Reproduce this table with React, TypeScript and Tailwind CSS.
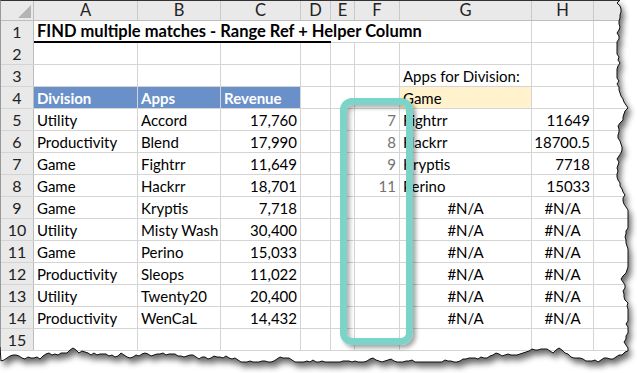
import React from 'react';

type Cell = { t?: string; align?: 'l' | 'r' | 'c'; cls?: string };

const WIDTHS = ['w-[104px]', 'w-[83px]', 'w-[80px]', 'w-[30px]', 'w-[24px]', 'w-[45px]', 'w-[132px]', 'w-[62px]', 'w-[80px]'];
const LETTERS = ['A', 'B', 'C', 'D', 'E', 'F', 'G', 'H', ''];

const data: [string, string, string][] = [
  ['Utility', 'Accord', '17,760'],
  ['Productivity', 'Blend', '17,990'],
  ['Game', 'Fightrr', '11,649'],
  ['Game', 'Hackrr', '18,701'],
  ['Game', 'Kryptis', '7,718'],
  ['Utility', 'Misty Wash', '30,400'],
  ['Game', 'Perino', '15,033'],
  ['Productivity', 'Sleops', '11,022'],
  ['Utility', 'Twenty20', '20,400'],
  ['Productivity', 'WenCaL', '14,432'],
];

const helper = ['7', '8', '9', '11'];
const found: [string, string][] = [
  ['Fightrr', '11649'],
  ['Hackrr', '18700.5'],
  ['Kryptis', '7718'],
  ['Perino', '15033'],
];

// seeded random for the torn paper edge
function rng(seed: number) {
  return () => {
    seed |= 0;
    seed = (seed + 0x6d2b79f5) | 0;
    let t = Math.imul(seed ^ (seed >>> 15), 1 | seed);
    t = (t + Math.imul(t ^ (t >>> 7), 61 | t)) ^ t;
    return ((t ^ (t >>> 14)) >>> 0) / 4294967296;
  };
}

function tornEdge() {
  const r = rng(7);
  const pts: [number, number][] = [[0, 0]];
  let x = 622;
  for (let y = 0; y <= 348; y += 3) {
    x += (r() - 0.5) * 5;
    x = Math.max(617, Math.min(628, x));
    pts.push([Math.round(x), y]);
  }
  let y = 350;
  for (let xx = x; xx >= 0; xx -= 3) {
    y += (r() - 0.48) * 5;
    if (xx < 60 && xx > 25) y += 0.6;
    y = Math.max(344, Math.min(362, y));
    pts.push([Math.round(xx), Math.round(y)]);
  }
  pts.push([0, 347]);
  return pts;
}

const GridCell = ({ w, c }: { w: string; c: Cell }) => {
  const align = c.align === 'r' ? 'justify-end' : c.align === 'c' ? 'justify-center' : 'justify-start';
  return (
    <div className={`${w} h-full shrink-0 flex items-end pb-[1px] leading-[18px] px-[3px] border-r border-[#d4d4d4] whitespace-nowrap ${align} ${c.cls ?? ''}`}>
      {c.t}
    </div>
  );
};

const RowHead = ({ n }: { n: number }) => (
  <div className="w-[33px] h-full shrink-0 flex items-center justify-center bg-[#e9e9e9] border-r border-[#bdbdbd] text-[16px] text-[#222]">
    {n}
  </div>
);

const Row = ({ n, cells }: { n: number; cells: Cell[] }) => (
  <div className="flex h-[22px] border-b border-[#d4d4d4]">
    <RowHead n={n} />
    {WIDTHS.map((w, i) => (
      <GridCell key={i} w={w} c={cells[i] ?? {}} />
    ))}
  </div>
);

export default function App() {
  const pts = tornEdge();
  const clip = `polygon(${pts.map(([x, y]) => `${x}px ${y}px`).join(',')})`;
  const shadowPts = pts.map(([x, y]) => `${x + 3},${y + 5}`).join(' ');
  const edgePts = pts.slice(1).map(([x, y]) => `${x},${y}`).join(' ');

  const rows: Cell[][] = data.map((d, i) => {
    const r: Cell[] = [{ t: d[0] }, { t: d[1] }, { t: d[2], align: 'r' }, {}, {}];
    r.push(i < 4 ? { t: helper[i], align: 'r', cls: 'text-[#767171]' } : {});
    if (i < 4) {
      r.push({ t: found[i][0] });
      r.push({ t: found[i][1], align: 'r' });
    } else {
      r.push({ t: '#N/A', align: 'c' });
      r.push({ t: '#N/A', align: 'c' });
    }
    return r;
  });

  return (
    <div className="relative w-[637px] h-[373px] bg-white overflow-hidden font-['Lato',sans-serif] text-[15px] text-black">
      <svg className="absolute inset-0" width="637" height="373">
        <defs>
          <filter id="blur" x="-10%" y="-10%" width="120%" height="120%">
            <feGaussianBlur stdDeviation="3" />
          </filter>
        </defs>
        <polygon points={shadowPts} fill="rgba(0,0,0,0.6)" filter="url(#blur)" />
      </svg>

      <div className="relative w-[637px] h-[373px] bg-white border-t border-l border-t-[#333] border-l-[#999]" style={{ clipPath: clip }}>
        {/* column headers */}
        <div className="flex h-[20px] bg-[#e9e9e9] border-b border-[#bdbdbd]">
          <div className="w-[33px] shrink-0 border-r border-[#bdbdbd] flex items-end justify-end p-[2px]">
            <div className="w-0 h-0 border-l-[13px] border-l-transparent border-b-[13px] border-b-[#b4b4b4]" />
          </div>
          {WIDTHS.map((w, i) => (
            <div key={i} className={`${w} shrink-0 flex items-center justify-center border-r border-[#c9c9c9] text-[16.5px] text-[#222]`}>
              {LETTERS[i]}
            </div>
          ))}
        </div>

        {/* row 1: title */}
        <div className="flex h-[22px]">
          <RowHead n={1} />
          <div className="w-[297px] shrink-0 h-full border-b-2 border-black flex items-center px-[3px] whitespace-nowrap font-bold text-[16.5px]">
            FIND multiple matches - Range Ref + Helper Column
          </div>
          <div className="w-[201px] shrink-0 h-full border-b border-r border-[#d4d4d4]" />
          <div className="w-[62px] shrink-0 h-full border-b border-r border-[#d4d4d4]" />
          <div className="w-[80px] shrink-0 h-full border-b border-[#d4d4d4]" />
        </div>

        <Row n={2} cells={[]} />
        <Row n={3} cells={[{}, {}, {}, {}, {}, {}, { t: 'Apps for Division:' }]} />
        <Row
          n={4}
          cells={[
            { t: 'Division', cls: 'bg-[#6990c9] text-white font-bold border-[#6990c9]' },
            { t: 'Apps', cls: 'bg-[#6990c9] text-white font-bold border-[#6990c9]' },
            { t: 'Revenue', cls: 'bg-[#6990c9] text-white font-bold' },
            {},
            {},
            {},
            { t: 'Game', cls: 'bg-[#fff2cc]' },
          ]}
        />
        {rows.map((r, i) => (
          <Row key={i} n={i + 5} cells={r} />
        ))}
        <Row n={15} cells={[]} />
      </div>

      <svg className="absolute inset-0 pointer-events-none" width="637" height="373">
        <polyline points={edgePts} fill="none" stroke="#111" strokeWidth="1" />
      </svg>

      {/* highlight box around the helper column */}
      <div className="absolute left-[340px] top-[98px] w-[73px] h-[247px] rounded-[12px] border-[7px] border-[#7cd3c7] shadow-[3px_3px_4px_rgba(0,0,0,0.35),inset_3px_3px_4px_rgba(0,0,0,0.3)]" />
    </div>
  );
}
